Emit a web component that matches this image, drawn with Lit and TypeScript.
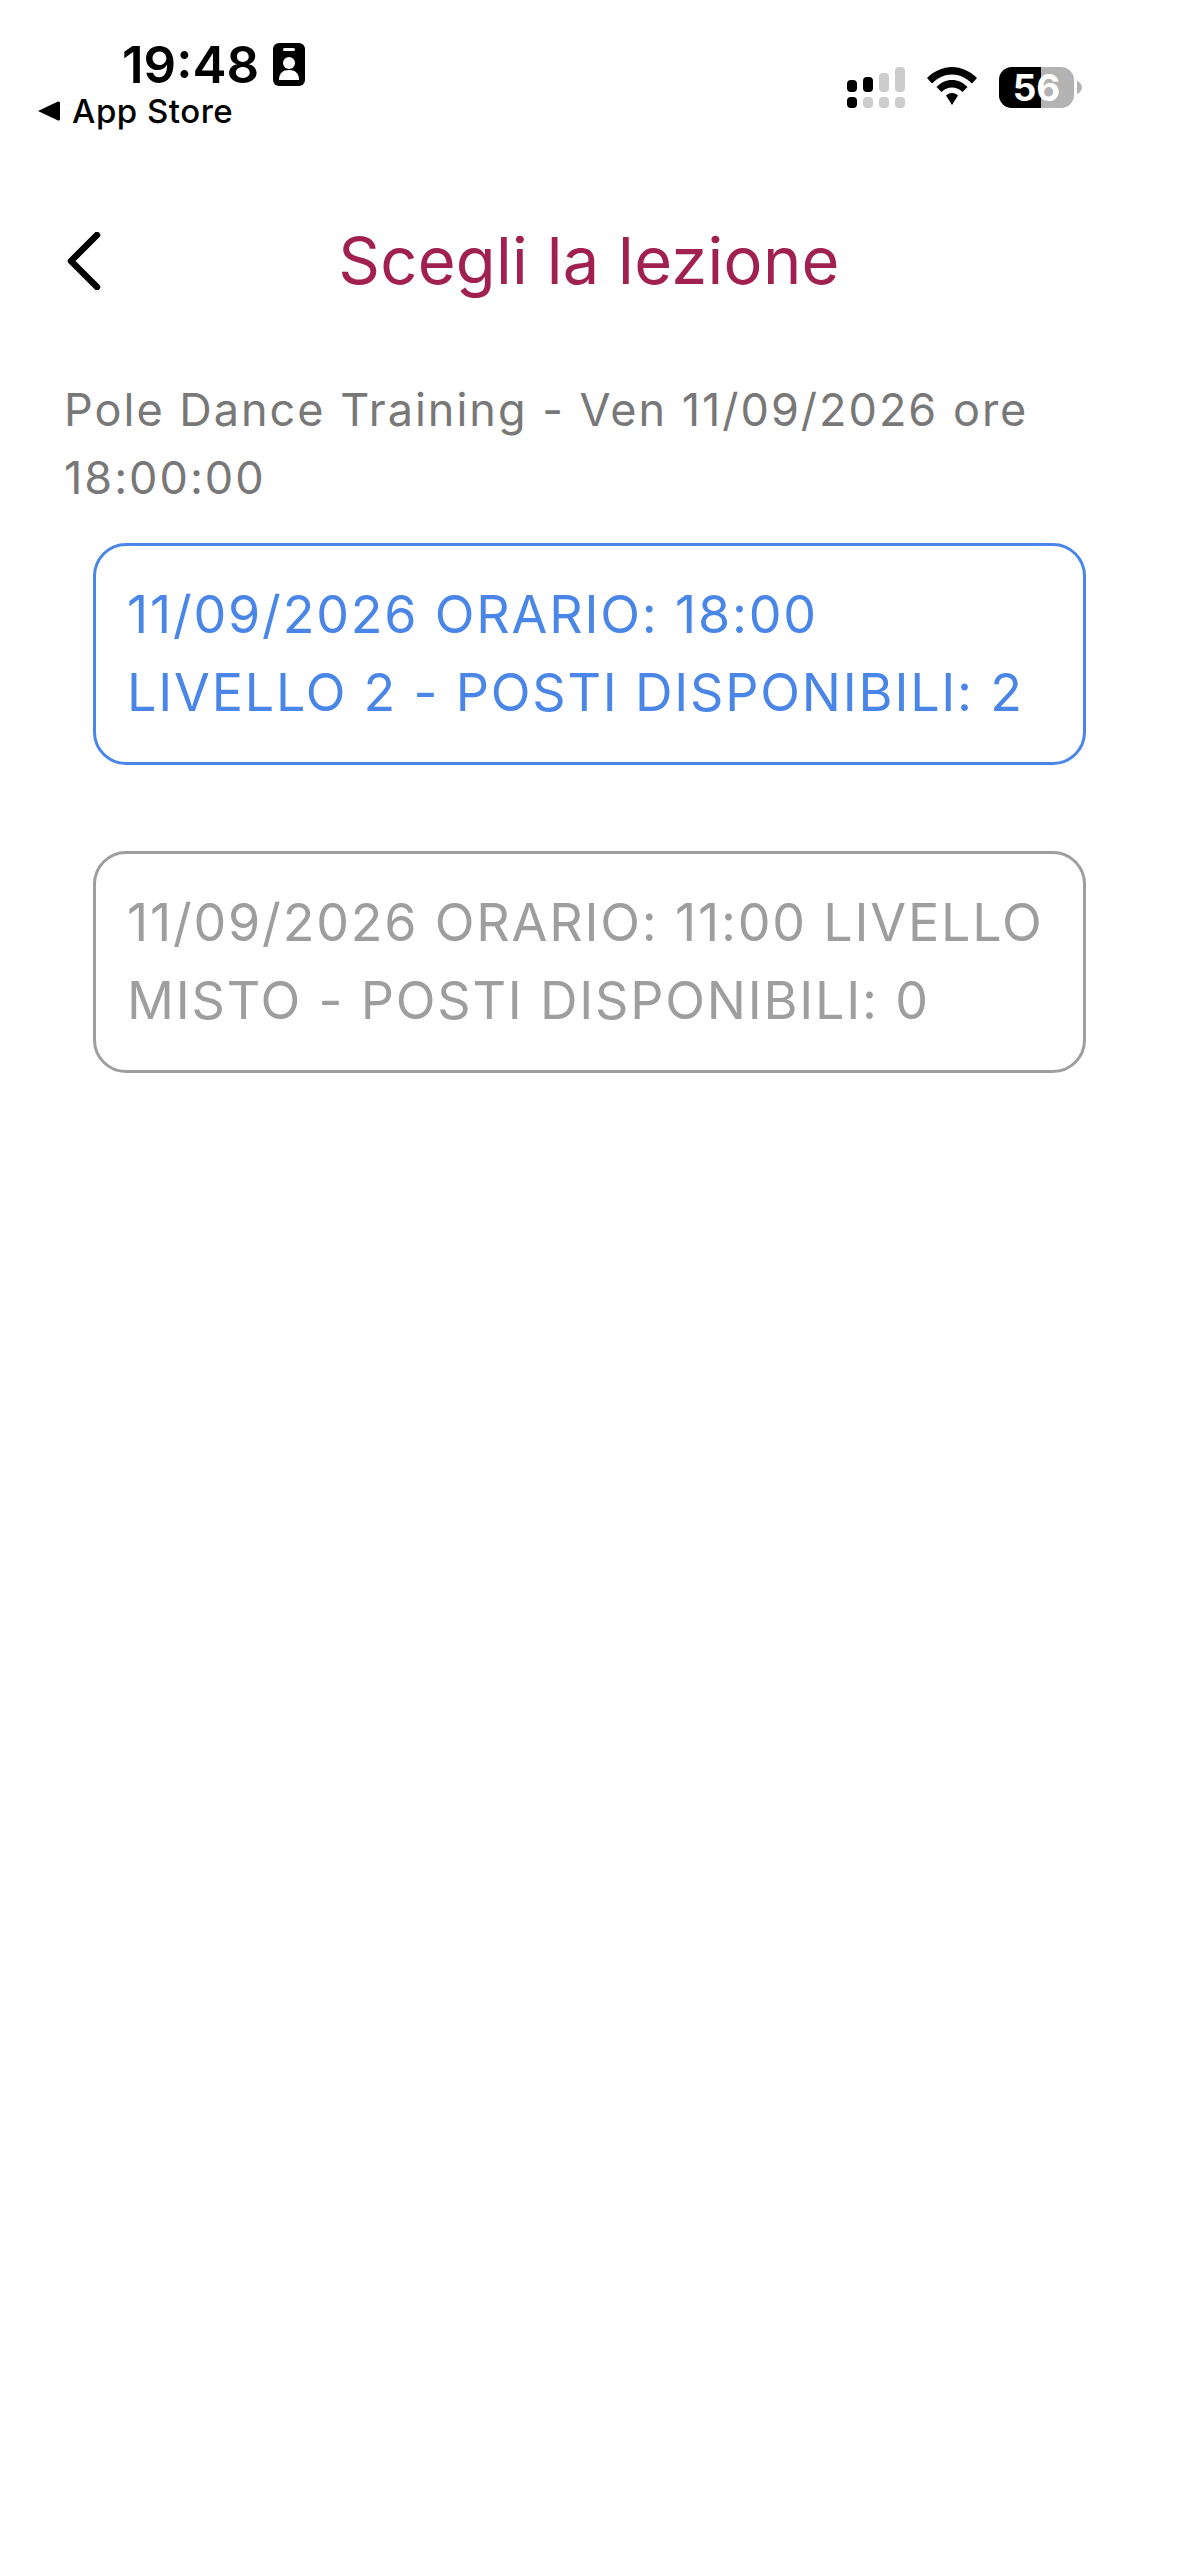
import { LitElement, css, html } from "lit";
import { customElement } from "lit/decorators.js";

const lessons = [
  { text: "11/09/2026 ORARIO: 18:00 LIVELLO 2 - POSTI DISPONIBILI: 2", available: true },
  { text: "11/09/2026 ORARIO: 11:00 LIVELLO MISTO - POSTI DISPONIBILI: 0", available: false },
];

@customElement("app-root")
export class AppRoot extends LitElement {
  static styles = css`
    :host {
      display: block;
      min-height: 2556px;
      background: #ffffff;
      font-family: Inter, "Liberation Sans", sans-serif;
      color: #000;
    }
    .status {
      display: flex;
      justify-content: space-between;
      height: 130px;
      padding: 43px 97px 0 38px;
      box-sizing: border-box;
    }
    .status-left {
      display: flex;
      flex-direction: column;
    }
    .clock {
      display: flex;
      align-items: center;
      gap: 14px;
      padding-left: 84px;
      height: 43px;
      font-size: 51px;
      font-weight: 600;
      line-height: 43px;
    }
    .store {
      display: flex;
      align-items: center;
      gap: 12px;
      margin-top: 13px;
      height: 24px;
      font-size: 33px;
      font-weight: 500;
      line-height: 24px;
      letter-spacing: 0.5px;
    }
    .status-right {
      display: flex;
      align-items: flex-start;
      gap: 22px;
      padding-top: 24px;
    }
    .battery {
      position: relative;
      width: 83px;
      height: 41px;
    }
    .battery span {
      position: absolute;
      left: 0;
      top: 0;
      width: 75px;
      line-height: 41px;
      text-align: center;
      font-size: 37px;
      font-weight: 700;
      color: #fff;
    }
    svg {
      display: block;
      flex: none;
    }
    .nav {
      display: flex;
      align-items: center;
      height: 62px;
      margin-top: 100px;
      padding-left: 64px;
    }
    .nav h1 {
      flex: 1;
      margin: 0;
      padding-right: 103px;
      text-align: center;
      font-size: 65px;
      font-weight: 400;
      line-height: 62px;
      letter-spacing: 0.3px;
      color: #a0214f;
    }
    .subtitle {
      margin: 0;
      padding: 84px 100px 0 64px;
      font-size: 45px;
      line-height: 68px;
      letter-spacing: 2px;
      color: #787878;
    }
    .list {
      display: flex;
      flex-direction: column;
      gap: 86px;
      padding: 31px 93px 0 93px;
    }
    .lesson {
      box-sizing: border-box;
      height: 222px;
      padding: 30px 37px 0 31px;
      border: 3px solid currentColor;
      border-radius: 33px;
      font-size: 52px;
      line-height: 78px;
      letter-spacing: 1.8px;
    }
    .lesson.on {
      color: #4a86e8;
    }
    .lesson.off {
      color: #9e9e9e;
    }
  `;

  render() {
    return html`
      <div class="status">
        <div class="status-left">
          <div class="clock">
            <span>19:48</span>
            <svg width="32" height="43" viewBox="0 0 32 43">
              <rect width="32" height="43" rx="6" fill="#000" />
              <rect x="10" y="5" width="12" height="3" rx="1.5" fill="#fff" />
              <circle cx="16" cy="20" r="6" fill="#fff" />
              <path d="M6 37c0-7 4-10 10-10s10 3 10 10z" fill="#fff" />
            </svg>
          </div>
          <div class="store">
            <svg width="22" height="20" viewBox="0 0 22 20">
              <path d="M0 10 20 0.5Q22 0 22 2V18Q22 20 20 19.500z" fill="#000" />
            </svg>
            <span>App Store</span>
          </div>
        </div>
        <div class="status-right">
          <svg width="58" height="41" viewBox="0 0 58 41">
            <rect x="0" y="13" width="10" height="12" rx="4" fill="#000" />
            <rect x="16" y="10" width="10" height="15" rx="4" fill="#000" />
            <rect x="32" y="6" width="10" height="19" rx="4" fill="#ccc" />
            <rect x="48" y="0" width="10" height="25" rx="4" fill="#ccc" />
            <rect x="0" y="30" width="10" height="11" rx="4" fill="#000" />
            <rect x="16" y="30" width="10" height="11" rx="4" fill="#ccc" />
            <rect x="32" y="30" width="10" height="11" rx="4" fill="#ccc" />
            <rect x="48" y="30" width="10" height="11" rx="4" fill="#ccc" />
          </svg>
          <svg width="50" height="38" viewBox="0 0 50 38">
            <path d="M25 0C34 0 43 4 50 11L45 16.500C39 10.500 32 7.500 25 7.500S11 10.500 5 16.500L0 11C7 4 16 0 25 0Z" fill="#000" />
            <path d="M25 13C31 13 36 15.500 40.500 20L35.500 25C32.500 22 29 20.500 25 20.500S17.500 22 14.500 25L9.500 20C14 15.500 19 13 25 13Z" fill="#000" />
            <path d="M25 26C27.500 26 29.500 27 31 28.500L25 38L19 28.500C20.500 27 22.500 26 25 26Z" fill="#000" />
          </svg>
          <div class="battery">
            <svg width="83" height="41" viewBox="0 0 83 41">
              <rect width="75" height="41" rx="13" fill="#b3b3b3" />
              <path d="M13 0H42V41H13A13 13 0 0 1 0 28V13A13 13 0 0 1 13 0Z" fill="#000" />
              <path d="M78 14C81 15 83 18 83 20.500S81 26 78 27Z" fill="#b3b3b3" />
            </svg>
            <span>56</span>
          </div>
        </div>
      </div>

      <div class="nav">
        <svg width="38" height="58" viewBox="0 0 38 58">
          <path d="M33 3 7 29 33 55" fill="none" stroke="#000" stroke-width="6.500" stroke-linecap="round" stroke-linejoin="round" />
        </svg>
        <h1>Scegli la lezione</h1>
      </div>

      <p class="subtitle">Pole Dance Training - Ven 11/09/2026 ore 18:00:00</p>

      <div class="list">
        ${lessons.map(
          (l) => html`<div class="lesson ${l.available ? "on" : "off"}">${l.text}</div>`
        )}
      </div>
    `;
  }
}
